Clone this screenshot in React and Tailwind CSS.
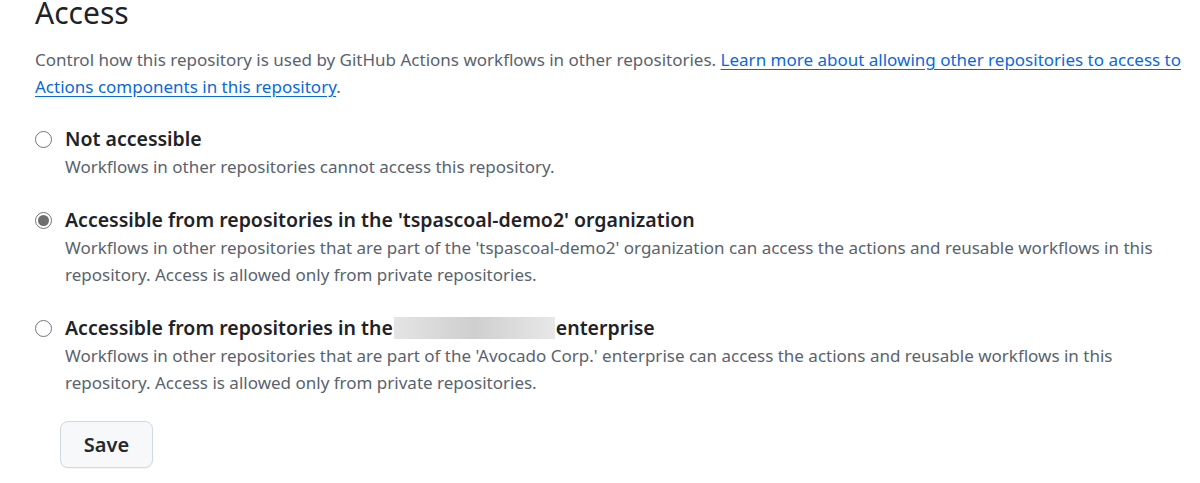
export default function App() {
  const font = { fontFamily: '"Noto Sans", "Liberation Sans", sans-serif' };
  const Radio = ({ checked }) => (
    <span className="mt-[6px] flex h-[17px] w-[17px] shrink-0 items-center justify-center rounded-full border border-[#6e7781] bg-white">
      {checked && <span className="h-[11px] w-[11px] rounded-full bg-[#6e6e6e]" />}
    </span>
  );
  return (
    <div className="h-[483px] w-[1200px] overflow-hidden bg-white text-[#1f2328]" style={font}>
      <div className="pl-[35px] pr-[8px]">
        <h2 className="mt-[-10px] text-[30px] leading-[45px] font-normal">Access</h2>
        <p className="mt-[11px] text-[17px] leading-[27px] text-[#59636e]">
          Control how this repository is used by GitHub Actions workflows in other repositories.{" "}
          <a className="text-[#0969da] underline underline-offset-[3px]" href="#">
            Learn more about allowing other repositories to access to Actions components in this repository
          </a>
          .
        </p>
        <div className="mt-[25px] flex flex-col gap-[26px]">
          <div className="flex gap-[13px]">
            <Radio />
            <div>
              <div className="text-[19.5px] leading-[28px] font-semibold">Not accessible</div>
              <div className="text-[17px] leading-[27px] text-[#59636e]">
                Workflows in other repositories cannot access this repository.
              </div>
            </div>
          </div>
          <div className="flex gap-[13px]">
            <Radio checked />
            <div>
              <div className="text-[19.5px] leading-[28px] font-semibold">
                Accessible from repositories in the 'tspascoal-demo2' organization
              </div>
              <div className="pr-[10px] text-[17px] leading-[27px] text-[#59636e]">
                Workflows in other repositories that are part of the 'tspascoal-demo2' organization can access the actions and reusable workflows in this repository. Access is allowed only from private repositories.
              </div>
            </div>
          </div>
          <div className="flex gap-[13px]">
            <Radio />
            <div>
              <div className="flex items-center text-[19.5px] leading-[28px] font-semibold">
                <span>Accessible from repositories in the</span>
                <span className="mx-[1px] inline-block h-[22px] w-[161px] bg-gradient-to-r from-[#e4e4e4] via-[#cfcfcf] to-[#e8e8e8]" />
                <span>enterprise</span>
              </div>
              <div className="pr-[40px] text-[17px] leading-[27px] text-[#59636e]">
                Workflows in other repositories that are part of the 'Avocado Corp.' enterprise can access the actions and reusable workflows in this repository. Access is allowed only from private repositories.
              </div>
            </div>
          </div>
        </div>
        <button className="ml-[25px] mt-[25px] h-[47px] w-[93px] rounded-[8px] border border-[#d1d9e0] bg-[#f6f8fa] text-[20px] font-semibold text-[#25292e] shadow-[0_1px_0_rgba(31,35,40,0.04)]">
          Save
        </button>
      </div>
    </div>
  );
}
